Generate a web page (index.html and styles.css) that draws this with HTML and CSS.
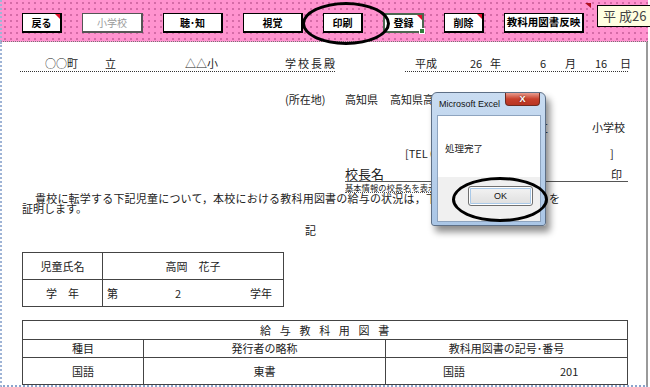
FILE: index.html
```html
<!DOCTYPE html>
<html lang="ja">
<head>
<meta charset="utf-8">
<link rel="stylesheet" href="styles.css">
</head>
<body>
<div class="sheet">
  <div class="toolbar">
    <div class="btn cm w40">戻る</div>
    <div class="btn gray w61">小学校</div>
    <div class="btn w60">聴･知</div>
    <div class="btn w60">視覚</div>
    <div class="btn w40">印刷</div>
    <div class="btn sel cm w41">登録</div>
    <div class="btn cm w40">削除</div>
    <div class="btn wide w80">教科用図書反映</div>
  </div>
  <div class="doc">
    <div class="r1">
      <div class="u1">
        <span class="w60">○○町</span><span class="w80">立</span><span class="w100">△△小</span><span class="sp2">学校長殿</span>
      </div>
      <div class="u2">
        <span class="w55">平成</span><span class="w20">26</span><span class="w50">年</span><span class="w25">6</span><span class="w30">月</span><span class="w25">16</span><span>日</span>
      </div>
    </div>
    <div class="r2">
      <span class="w60">(所在地)</span><span class="w45">高知県</span><span>高知県高知市○○町</span>
    </div>
    <div class="r3">
      <span class="w88">○○町立</span><span>小学校</span>
    </div>
    <div class="r4">
      <span class="w205">[TEL 088-000-0000</span><span>]</span>
    </div>
    <div class="r5">
      <div class="sig"><span class="big">校長名</span><span class="inkan">印</span></div>
    </div>
    <div class="r6"><span class="small">基本情報の校長名を表示</span></div>
    <div class="p1">貴校に転学する下記児童について，本校における教科用図書の給与の状況は，下記のとおりであることを</div>
    <div class="p2">証明します。</div>
    <div class="ki">記</div>
    <table class="t1">
      <colgroup><col class="c80"><col class="c181"></colgroup>
      <tr>
        <td>児童氏名</td>
        <td>高岡　花子</td>
      </tr>
      <tr>
        <td>学　年</td>
        <td class="left"><div class="grade"><span class="w68">第</span><span class="w75">2</span><span>学年</span></div></td>
      </tr>
    </table>
    <table class="t2">
      <colgroup><col class="c121"><col class="c242"><col class="c242"></colgroup>
      <tr class="h19"><td colspan="3" class="title">給与教科用図書</td></tr>
      <tr class="h18">
        <td>種目</td>
        <td>発行者の略称</td>
        <td>教科用図書の記号･番号</td>
      </tr>
      <tr class="h27">
        <td>国語</td>
        <td>東書</td>
        <td class="left"><div class="code"><span class="w117">国語</span><span>201</span></div></td>
      </tr>
    </table>
  </div>

  <div class="note">平 成26</div>
  <div class="tri"></div>
  <div class="ring ring1"></div>

  <div class="dialog">
    <div class="dlg-title">
      <span class="dlg-name">Microsoft Excel</span>
      <span class="dlg-close">X</span>
    </div>
    <div class="dlg-client">
      <div class="dlg-msg">処理完了</div>
      <div class="dlg-foot"><div class="dlg-ok">OK</div></div>
    </div>
  </div>
  <div class="ring ring2"></div>
</div>
</body>
</html>
```

FILE: styles.css
```css
* { box-sizing: border-box; margin: 0; padding: 0; }
body { margin: 0; background: #fff; font-family: "Noto Sans CJK JP", "Noto Sans", sans-serif; }

.sheet { position: relative; width: 650px; height: 387px; overflow: hidden; background: #fff; }

.toolbar {
  height: 42px; width: 648px;
  background-color: #ff93cf;
  background-image: radial-gradient(circle, #d46aa6 0.7px, transparent 1.1px);
  background-size: 6px 6px;
  border-left: 2px dotted #9fb4d6;
  border-bottom: 1px dotted #777;
  display: flex; align-items: flex-start; gap: 20px;
  padding: 13px 0 0 20px;
}
.btn {
  position: relative;
  height: 20px; background: #fff;
  border: 1px solid #000; border-right-width: 2px; border-bottom-width: 2px;
  font-size: 10px; font-weight: bold; color: #000;
  display: flex; align-items: center; justify-content: center;
  line-height: 1;
}
.btn.gray { color: #9a9a9a; font-weight: normal; border-color: #555; }
.btn.wide { font-size: 10.5px; }
.btn.sel { border: 2px solid #4d6650; }
.btn.sel::before { content: ""; position: absolute; right: -3px; bottom: -3px; width: 4px; height: 4px; background: #2f7d3c; border: 1px solid #fff; }
.btn.cm::after { content: ""; position: absolute; right: 0; top: 0; border-top: 5px solid #e0102a; border-left: 5px solid transparent; }

.w20 { width: 20px; } .w25 { width: 25px; } .w30 { width: 30px; } .w40 { width: 40px; } .w41 { width: 41px; }
.w45 { width: 45px; } .w50 { width: 50px; } .w55 { width: 55px; } .w60 { width: 60px; } .w61 { width: 61px; }
.w68 { width: 68px; } .w75 { width: 75px; } .w80 { width: 80px; } .w88 { width: 88px; } .w100 { width: 100px; }
.w117 { width: 117px; } .w205 { width: 205px; }
span { display: inline-block; flex: none; }

.doc {
  width: 648px; height: 345px;
  border-left: 2px dotted #9fb4d6;
  border-right: 2px solid #9a9a9a;
  border-bottom: 2px dotted #8aa4cc;
  overflow: hidden;
  font-size: 11px; line-height: 13px; color: #222;
}
.r1 { display: flex; margin-top: 15px; height: 15px; }
.u1 { display: flex; margin-left: 18px; width: 315px; height: 15px; padding-left: 25px; border-bottom: 1px dotted #333; }
.u2 { display: flex; margin-left: 70px; width: 223px; height: 15px; padding-left: 10px; border-bottom: 1px dotted #333; }
.sp2 { letter-spacing: 2px; }
.r2 { display: flex; margin-top: 21px; height: 13px; padding-left: 283px; white-space: nowrap; }
.r3 { display: flex; margin-top: 15px; height: 13px; padding-left: 502px; white-space: nowrap; }
.r4 { display: flex; margin-top: 13px; height: 13px; padding-left: 403px; white-space: nowrap; }
.r5 { margin-top: 6px; height: 16px; }
.sig { margin-left: 343px; width: 283px; height: 16px; border-bottom: 1px solid #555; display: flex; justify-content: space-between; align-items: flex-end; }
.big { font-size: 13px; line-height: 15px; }
.inkan { margin-right: 6px; line-height: 14px; }
.r6 { height: 11px; padding-left: 343px; }
.small { font-size: 8.3px; line-height: 10px; border-bottom: 1px dotted #555; width: 90px; white-space: nowrap; overflow: hidden; }
.p1 { height: 10px; line-height: 10px; padding-left: 33px; white-space: nowrap; letter-spacing: 0.2px; }
.p2 { height: 10px; line-height: 10px; padding-left: 20px; }
.ki { margin-top: 11px; height: 12px; line-height: 12px; padding-left: 303px; }

table { border-collapse: collapse; table-layout: fixed; }
td { border: 1px solid #444; text-align: center; padding: 0; font-size: 11px; line-height: 13px; color: #222; white-space: nowrap; }
td.left { text-align: left; }
.t1 { margin-top: 16px; margin-left: 20px; width: 261px; }
.t1 tr { height: 27px; }
.c80 { width: 80px; } .c181 { width: 181px; }
.grade { display: flex; padding-left: 4px; }
.t2 { margin-top: 13px; margin-left: 20px; width: 605px; }
.h19 { height: 19px; } .h18 { height: 18px; } .h27 { height: 27px; }
.c121 { width: 121px; } .c242 { width: 242px; }
.title { letter-spacing: 8.7px; padding-left: 8px; }
.code { display: flex; padding-left: 57px; }

.note {
  position: absolute; left: 597px; top: 5px; width: 70px; height: 22px;
  background: #ffffe1; border: 1px solid #000;
  font-size: 13px; line-height: 20px; color: #444; padding-left: 5px; white-space: nowrap;
}
.tri { position: absolute; left: 585px; top: 3px; border-top: 5px solid #b01020; border-left: 6px solid transparent; }

.ring { position: absolute; border: 3px solid #000; border-radius: 50%; }
.ring1 { left: 302px; top: 2px; width: 88px; height: 43px; }
.ring2 { left: 452px; top: 177px; width: 96px; height: 45px; }

.dialog {
  position: absolute; left: 431px; top: 92px; width: 115px; height: 134px;
  background: linear-gradient(#c9dcf1, #aac6e6);
  border: 1px solid #5d6f86; border-radius: 6px 6px 3px 3px;
  box-shadow: 4px 6px 7px rgba(0,0,0,0.45);
  display: flex; flex-direction: column;
  font-family: "Liberation Sans", Arial, sans-serif;
}
.dlg-title { height: 22px; display: flex; justify-content: space-between; align-items: flex-start; padding: 0 5px 0 7px; }
.dlg-name { font-size: 9px; line-height: 9px; margin-top: 7px; color: #111; white-space: nowrap; }
.dlg-close {
  width: 35px; height: 13px; margin-top: 0;
  background: linear-gradient(#e99c8e, #c7402c 50%, #b83522);
  border: 1px solid #6e2a20; border-top: none; border-radius: 0 0 4px 4px;
  color: #fff; font-size: 9px; font-weight: bold; line-height: 12px; text-align: center;
  text-shadow: 0 0 2px #5a1a10;
}
.dlg-client { flex: 1; margin: 0 4px 3px 5px; border: 1px solid #8ea4bf; background: #f0f0f0; display: flex; flex-direction: column; }
.dlg-msg { height: 61px; background: #fff; padding: 27px 0 0 7px; font-family: "Noto Sans CJK JP", sans-serif; font-size: 9.5px; line-height: 11px; color: #222; }
.dlg-foot { flex: 1; display: flex; justify-content: flex-end; padding: 9px 7px 0 0; }
.dlg-ok {
  width: 65px; height: 20px;
  background: linear-gradient(#f4f4f4, #dedede);
  border: 1px solid #707070; border-radius: 3px;
  box-shadow: inset 0 0 0 1px #fff, inset 0 0 0 2px #a9c9e8;
  font-size: 9px; line-height: 18px; text-align: center; color: #111;
}
```
